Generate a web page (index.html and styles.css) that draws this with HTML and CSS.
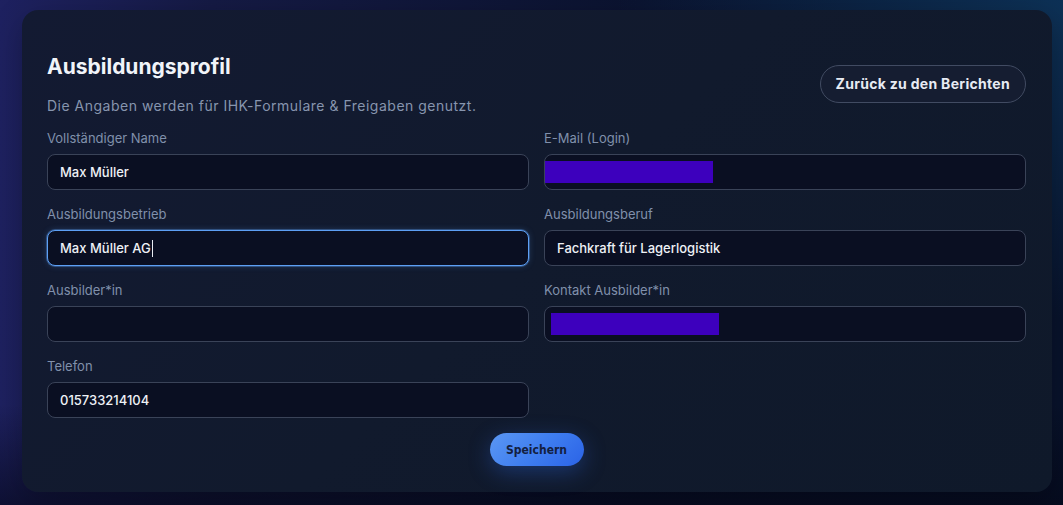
FILE: index.html
```html
<!DOCTYPE html>
<html lang="de">
<head>
<meta charset="utf-8">
<title>Ausbildungsprofil</title>
<link rel="stylesheet" href="styles.css">
</head>
<body>
<div class="page">
  <section class="card">
    <header class="card-head">
      <div class="titles">
        <h1 class="title">Ausbildungsprofil</h1>
        <p class="subtitle">Die Angaben werden für IHK-Formulare &amp; Freigaben genutzt.</p>
      </div>
      <button class="btn-back" type="button">Zurück zu den Berichten</button>
    </header>
    <form class="form">
      <div class="grid">
        <div class="field">
          <label class="label">Vollständiger Name</label>
          <div class="input">Max Müller</div>
        </div>
        <div class="field">
          <label class="label">E-Mail (Login)</label>
          <div class="input input-redacted"><span class="redact redact-a"></span></div>
        </div>
        <div class="field">
          <label class="label">Ausbildungsbetrieb</label>
          <div class="input input-focus">Max Müller AG<span class="caret"></span></div>
        </div>
        <div class="field">
          <label class="label">Ausbildungsberuf</label>
          <div class="input">Fachkraft für Lagerlogistik</div>
        </div>
        <div class="field">
          <label class="label">Ausbilder*in</label>
          <div class="input"></div>
        </div>
        <div class="field">
          <label class="label">Kontakt Ausbilder*in</label>
          <div class="input input-redacted"><span class="redact redact-b"></span></div>
        </div>
        <div class="field">
          <label class="label">Telefon</label>
          <div class="input">015733214104</div>
        </div>
      </div>
      <div class="actions">
        <button class="btn-save" type="button">Speichern</button>
      </div>
    </form>
  </section>
</div>
</body>
</html>
```

FILE: styles.css
```css
* { box-sizing: border-box; }

html, body {
  margin: 0;
  height: 100%;
}

body {
  font-family: Inter, "Noto Sans", "DejaVu Sans", sans-serif;
  background:
    radial-gradient(ellipse 60% 90% at 100% 0%, #0d3156 0%, rgba(13,49,86,0) 70%),
    linear-gradient(90deg, #1e2160 0%, #151a44 20%, #0b1330 60%, #08132c 100%);
  color: #e7ebf2;
  overflow: hidden;
}

.page {
  padding: 10px 11px 13px 22px;
  min-height: 100%;
  background: linear-gradient(180deg, rgba(0,0,0,0) 80%, rgba(4,6,22,0.6) 100%);
}

.card {
  background: linear-gradient(135deg, #131a32 0%, #111a2d 50%, #0f192a 100%);
  border-radius: 16px;
  padding: 43px 26px 26px 25px;
  box-shadow: 0 10px 30px rgba(0,0,0,0.25);
}

.card-head {
  display: flex;
  justify-content: space-between;
  align-items: center;
}

.title {
  margin: 0;
  font-size: 21px;
  line-height: 28px;
  font-weight: 700;
  color: #f1f4f9;
  letter-spacing: 0;
}

.subtitle {
  margin: 15px 0 0;
  font-size: 14px;
  line-height: 20px;
  color: #8795ae;
  letter-spacing: 0.5px;
}

.btn-back {
  font-family: inherit;
  font-size: 14px;
  font-weight: 700;
  color: #e7ebf3;
  background: #151d31;
  border: 1px solid #414b62;
  border-radius: 999px;
  height: 38px;
  padding: 0 15px;
  letter-spacing: 0.3px;
  margin-top: -2px;
  cursor: pointer;
}

.form { margin-top: 13px; }

.grid {
  display: grid;
  grid-template-columns: 1fr 1fr;
  column-gap: 15px;
  row-gap: 15px;
}

.field {
  display: flex;
  flex-direction: column;
  gap: 7px;
}

.label {
  font-size: 13px;
  line-height: 18px;
  color: #8090ab;
}

.input {
  height: 36px;
  border: 1px solid #3a4358;
  border-radius: 8px;
  background: #0a0f22;
  padding: 0 12px;
  display: flex;
  align-items: center;
  font-size: 13px;
  font-weight: 500;
  color: #eef1f6;
}

.input-focus {
  border-color: #5d9ff4;
  box-shadow: 0 0 0 1px rgba(93,159,244,0.35), 0 0 6px rgba(93,159,244,0.25);
}

.caret {
  display: inline-block;
  width: 1px;
  height: 17px;
  background: #e8ecf3;
  margin-left: 1px;
}

.input-redacted { padding: 0; }

.redact {
  display: block;
  height: 22px;
  width: 168px;
  background: #3d00bd;
}

.redact-b { margin-left: 6px; }

.actions {
  display: flex;
  justify-content: center;
  margin-top: 15px;
}

.btn-save {
  font-family: "DejaVu Sans", sans-serif;
  font-stretch: condensed;
  font-size: 12px;
  font-weight: 700;
  color: #13203f;
  height: 33px;
  width: 94px;
  border: none;
  border-radius: 999px;
  background: linear-gradient(135deg, #5b97f2 0%, #3f7ef0 50%, #2b63e6 100%);
  box-shadow: 0 6px 22px rgba(45,105,230,0.35);
  cursor: pointer;
}
```
